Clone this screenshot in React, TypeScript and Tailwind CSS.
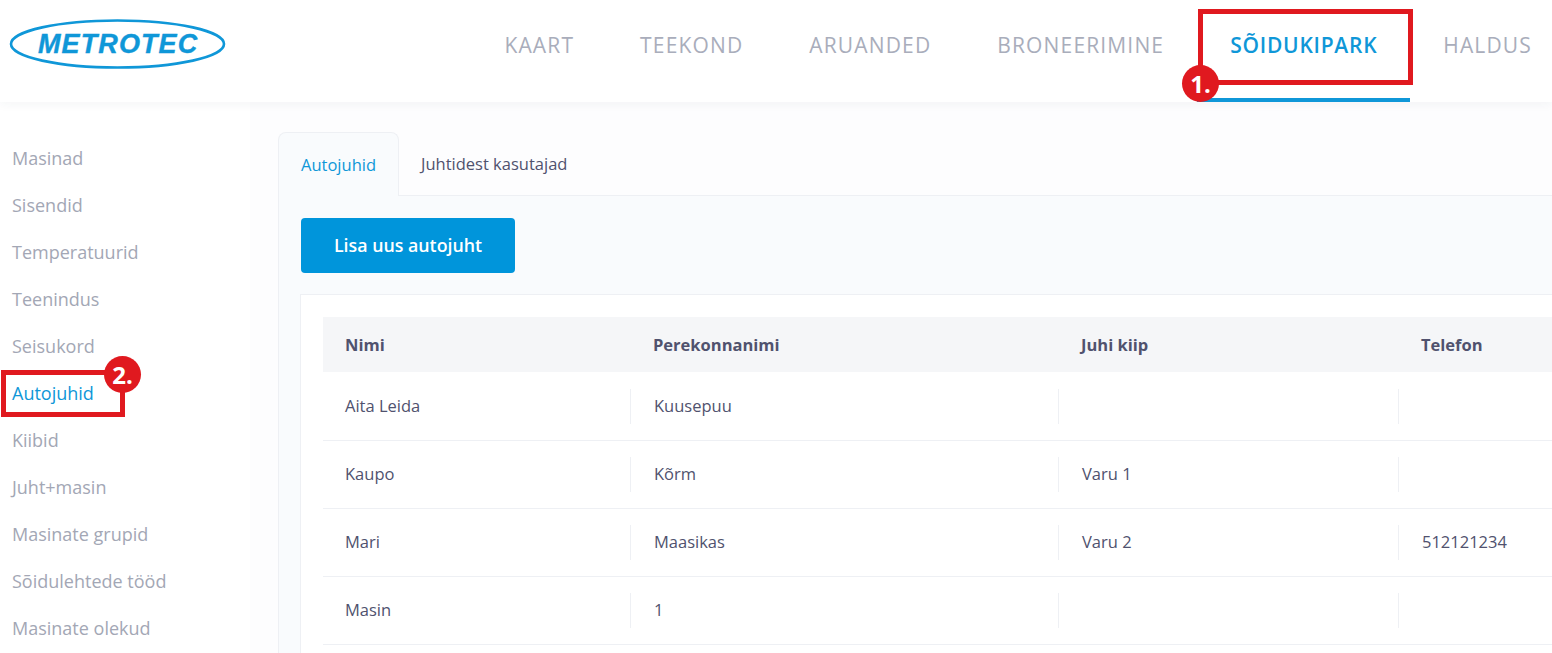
const navItems = ["KAART", "TEEKOND", "ARUANDED", "BRONEERIMINE", "SÕIDUKIPARK", "HALDUS"];

const sideItems = [
  "Masinad",
  "Sisendid",
  "Temperatuurid",
  "Teenindus",
  "Seisukord",
  "Autojuhid",
  "Kiibid",
  "Juht+masin",
  "Masinate grupid",
  "Sõidulehtede tööd",
  "Masinate olekud",
];

const rows = [
  ["Aita Leida", "Kuusepuu", "", ""],
  ["Kaupo", "Kõrm", "Varu 1", ""],
  ["Mari", "Maasikas", "Varu 2", "512121234"],
  ["Masin", "1", "", ""],
];

function Logo() {
  return (
    <div className="relative h-[52px] w-[218px]">
      <svg width="218" height="52" viewBox="0 0 218 52" className="absolute left-0 top-0">
        <ellipse cx="108.5" cy="25" rx="106.5" ry="23.5" fill="none" stroke="#0f97d8" strokeWidth="2.6" />
      </svg>
      <div className="absolute left-[29px] top-[6px] font-['Liberation_Sans',sans-serif] text-[27px] font-bold italic leading-[38px] tracking-[1.1px] text-[#0f97d8] [-webkit-text-stroke:0.4px_#0f97d8]">
        METROTEC
      </div>
    </div>
  );
}

function Badge({ label, className }: { label: string; className: string }) {
  return (
    <div className={`absolute z-20 flex h-[37px] w-[37px] items-center justify-center rounded-full bg-[#e0191f] text-[24px] font-bold text-white ${className}`}>
      {label}
    </div>
  );
}

export default function App() {
  return (
    <div className="relative flex h-[653px] w-[1552px] flex-col overflow-hidden bg-white font-['Open_Sans',sans-serif]">
      <header className="relative z-10 flex h-[102px] shrink-0 items-start justify-between bg-white shadow-[0_2px_10px_rgba(40,50,80,0.05)]">
        <div className="pl-[9px] pt-[19px]">
          <Logo />
        </div>
        <nav className="-mr-[13px] flex h-full">
          {navItems.map((item) => (
            <a
              key={item}
              className={
                item === "SÕIDUKIPARK"
                  ? "flex h-full items-center border-b-4 border-[#0f97d8] px-[33px] pb-[6px] text-[21px] font-semibold tracking-[0.75px] text-[#0f97d8]"
                  : "flex h-full items-center border-b-4 border-transparent px-[33px] pb-[6px] text-[21px] tracking-[1.15px] text-[#a9adbb]"
              }
            >
              {item}
            </a>
          ))}
        </nav>
      </header>

      {/* annotation boxes from the screenshot */}
      <div className="absolute left-[1198px] top-[9px] z-20 h-[76px] w-[215px] border-[5px] border-[#e0191f]" />
      <Badge label="1." className="left-[1182px] top-[65px]" />
      <div className="absolute left-[1px] top-[370px] z-20 h-[47px] w-[124px] border-[5px] border-[#e0191f]" />
      <Badge label="2." className="left-[104px] top-[356px]" />

      <div className="flex min-h-0 flex-1">
        <aside className="w-[250px] shrink-0 bg-white pt-[33px] shadow-[2px_0_8px_rgba(40,50,80,0.03)]">
          {sideItems.map((item) => (
            <div
              key={item}
              className={`flex h-[47px] items-center pl-[12px] text-[18px] ${item === "Autojuhid" ? "text-[#0f97d8]" : "text-[#a3a7b5]"}`}
            >
              {item}
            </div>
          ))}
        </aside>

        <main className="min-w-0 flex-1 bg-[#fdfdfe] pl-[28px] pt-[30px]">
          <div className="flex h-[64px] border-b border-[#eef0f4]">
            <div className="-mb-px flex w-[121px] items-center justify-center rounded-t-lg border border-b-0 border-[#eef0f4] bg-[#f9fbfd] pt-[2px] text-[16.5px] text-[#0f97d8]">
              Autojuhid
            </div>
            <div className="flex items-center pl-[22px] pt-[2px] text-[16.5px] text-[#50526e]">Juhtidest kasutajad</div>
          </div>

          <div className="border-l border-[#eef0f4] bg-[#f9fbfd] pl-[22px] pt-[22px]">
            <button className="flex h-[55px] w-[214px] items-center justify-center rounded bg-[#0095db] text-[17.8px] font-semibold text-white">
              Lisa uus autojuht
            </button>

            <div className="-ml-px mt-[21px] border border-r-0 border-[#eef0f4] bg-white pb-[22px] pl-[22px] pt-[22px]">
              <div className="grid h-[55px] grid-cols-[308px_428px_340px_1fr] items-center bg-[#f5f6f8] pt-[2px] text-[16.5px] font-bold text-[#50526e]">
                <div className="pl-[22px]">Nimi</div>
                <div className="pl-[22px]">Perekonnanimi</div>
                <div className="pl-[22px]">Juhi kiip</div>
                <div className="pl-[22px]">Telefon</div>
              </div>
              <div className="pt-px">
                {rows.map((row) => (
                  <div
                    key={row[0]}
                    className="grid h-[68px] grid-cols-[307px_428px_340px_1fr] items-center border-b border-[#eef0f4] text-[16.5px] text-[#50526e]"
                  >
                    {row.map((cell, i) => (
                      <div
                        key={i}
                        className={
                          i === 0
                            ? "flex h-[35px] items-center pl-[22px]"
                            : "flex h-[35px] items-center border-l border-[#eef0f4] pl-[23px]"
                        }
                      >
                        {cell}
                      </div>
                    ))}
                  </div>
                ))}
              </div>
            </div>
          </div>
        </main>
      </div>
    </div>
  );
}
